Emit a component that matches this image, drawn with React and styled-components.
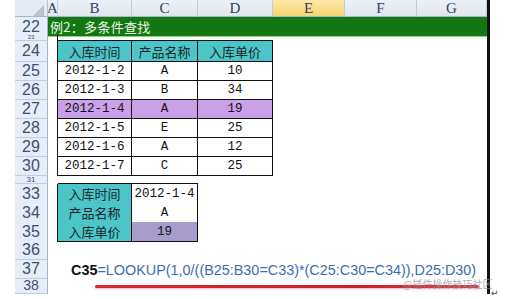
import styled, { createGlobalStyle } from "styled-components";

const GlobalStyle = createGlobalStyle`
    html, body { margin:0; padding:0; background:#fff; }
    body { font-family: "Liberation Sans", Arial, sans-serif; }
`

const COLS = "33px 10px 74px 66px 75px 72px 72px 70px";
const CJK = `"Liberation Mono", "Noto Sans CJK SC", monospace`;

const Page = styled.div`
    display:flex;
    align-items:flex-end;
    width:507px;
    height:299px;
    padding-left:15px;
    box-sizing:border-box;
    overflow:hidden;
    position:relative;
`
const Sheet = styled.div`
    display:flex;
    flex-direction:column;
    width:475px;
    height:294px;
    align-self:flex-start;
    border-right:3px solid #111;
    box-sizing:border-box;
    overflow:hidden;
`
const Row = styled.div`
    display:grid;
    grid-template-columns:${COLS};
    height:${p => p.h}px;
    flex:none;
`
const Corner = styled.div`
    background:#e4eaf2;
    border-right:1px solid #b4c3d6;
    border-bottom:1px solid #a9b9cd;
    display:flex;
    align-items:flex-start;
    justify-content:flex-end;
    padding:5px 3px 0 0;
    box-sizing:border-box;
`
const ColHead = styled.div`
    background:${p => p.active ? "linear-gradient(#fbe9a8, #f6d574)" : "linear-gradient(#edf1f6, #dfe6ef)"};
    border-right:1px solid #c3cedb;
    border-bottom:1px solid #a9b9cd;
    box-sizing:border-box;
    display:flex;
    align-items:center;
    justify-content:center;
    font-family:"Liberation Serif", serif;
    font-size:15px;
    color:#33425a;
    overflow:hidden;
`
const RowHead = styled.div`
    background:#e6edf6;
    border-right:1px solid #9fb3ca;
    border-bottom:1px solid #bfcde0;
    box-sizing:border-box;
    display:flex;
    align-items:${p => p.top ? "flex-start" : "center"};
    justify-content:center;
    font-family:"Liberation Sans", Arial, sans-serif;
    font-size:${p => p.small ? `${p.small}px` : "16px"};
    line-height:${p => p.small ? `${p.small - 1}px` : "normal"};
    color:#3e5073;
    overflow:hidden;
`
const Banner = styled.div`
    grid-column:2 / -1;
    background:#137813;
    border-bottom:1px solid #8fd670;
    box-sizing:border-box;
    display:flex;
    align-items:center;
    padding-left:2px;
    font-family:"Noto Sans CJK SC", sans-serif;
    font-size:13px;
    color:#eef7e4;
    letter-spacing:0.3px;
`
const Blank = styled.div`
    grid-column:${p => p.span ? `span ${p.span}` : "auto"};
    border-bottom:${p => p.edge ? "1px solid #111" : "none"};
    border-right:${p => p.side ? "1px solid #111" : "none"};
    box-sizing:border-box;
`
const Cell = styled.div`
    background:${p => p.tone === "teal" ? "#4dc4c8" : p.tone === "violet" ? "#c8a1e9" : p.tone === "slate" ? "#a79dcc" : "#fff"};
    border-right:1px solid #111;
    border-bottom:1px solid #111;
    box-sizing:border-box;
    display:flex;
    align-items:center;
    justify-content:center;
    font-family:${CJK};
    font-size:${p => p.cjk ? "13px" : "12.5px"};
    color:${p => p.cjk ? "#16282a" : "#111"};
    white-space:nowrap;
`
const Formula = styled.div`
    grid-column:2 / -1;
    display:flex;
    align-items:center;
    padding-left:23px;
    font-family:"Liberation Sans", Arial, sans-serif;
    font-size:14.4px;
    color:#3b6db0;
    white-space:nowrap;
    b { color:#111; }
`
const Underline = styled.div`
    grid-column:2 / -1;
    display:flex;
    align-items:flex-start;
    padding:6px 8px 0 47px;
    box-sizing:border-box;
    &::after {
        content:"";
        flex:1;
        height:3px;
        border-radius:2px;
        background:linear-gradient(90deg, #d8282c, #cf1f24 70%, #c94a4a);
        box-shadow:0 1px 2px rgba(200,40,40,0.35);
    }
`
const Watermark = styled.div`
    position:absolute;
    left:403px;
    top:278px;
    font-family:"Noto Sans CJK SC", sans-serif;
    font-size:10px;
    line-height:11px;
    color:rgba(150,140,150,0.75);
`
const Return = styled.div`
    font-family:"DejaVu Sans", sans-serif;
    font-size:9px;
    line-height:10px;
    color:#444;
    padding:0 0 1px 1px;
`

const letters = ["A", "B", "C", "D", "E", "F", "G"];
const records = [
    ["2012-1-2", "A", "10"],
    ["2012-1-3", "B", "34"],
    ["2012-1-4", "A", "19"],
    ["2012-1-5", "E", "25"],
    ["2012-1-6", "A", "12"],
    ["2012-1-7", "C", "25"],
];
const lookup = [
    ["入库时间", "2012-1-4"],
    ["产品名称", "A"],
    ["入库单价", "19"],
];

export default function App() {
    return (
        <>
            <GlobalStyle />
            <Page>
                <Sheet>
                    <Row h={17}>
                        <Corner>
                            <svg width="11" height="11" viewBox="0 0 11 11">
                                <polygon points="11,0 11,11 0,11" fill="#b9c2cc" />
                            </svg>
                        </Corner>
                        {letters.map(l => <ColHead key={l} active={l === "E"}>{l}</ColHead>)}
                    </Row>
                    <Row h={18}>
                        <RowHead>22</RowHead>
                        <Banner>例2：多条件查找</Banner>
                    </Row>
                    <Row h={6}>
                        <RowHead small={6}>23</RowHead>
                        <Blank side />
                        <Blank span={3} edge />
                    </Row>
                    <Row h={21}>
                        <RowHead>24</RowHead>
                        <Blank side />
                        {["入库时间", "产品名称", "入库单价"].map(t => <Cell key={t} tone="teal" cjk>{t}</Cell>)}
                    </Row>
                    {records.map((r, i) => (
                        <Row h={19} key={i}>
                            <RowHead>{25 + i}</RowHead>
                            <Blank side />
                            {r.map((v, j) => <Cell key={j} tone={i === 2 ? "violet" : undefined}>{v}</Cell>)}
                        </Row>
                    ))}
                    <Row h={8}>
                        <RowHead small={8}>31</RowHead>
                        <Blank />
                        <Blank span={2} edge />
                    </Row>
                    {lookup.map(([k, v], i) => (
                        <Row h={19} key={k}>
                            <RowHead>{33 + i}</RowHead>
                            <Blank side />
                            <Cell tone="teal" cjk>{k}</Cell>
                            <Cell tone={i === 2 ? "slate" : undefined}>{v}</Cell>
                        </Row>
                    ))}
                    <Row h={19}>
                        <RowHead>36</RowHead>
                    </Row>
                    <Row h={19}>
                        <RowHead>37</RowHead>
                        <Formula><b>C35</b>=LOOKUP(1,0/((B25:B30=C33)*(C25:C30=C34)),D25:D30)</Formula>
                    </Row>
                    <Row h={15}>
                        <RowHead small={14} top>38</RowHead>
                        <Underline />
                    </Row>
                </Sheet>
                <Return>↵</Return>
                <Watermark>@插件操作技巧社区</Watermark>
            </Page>
        </>
    )
}
